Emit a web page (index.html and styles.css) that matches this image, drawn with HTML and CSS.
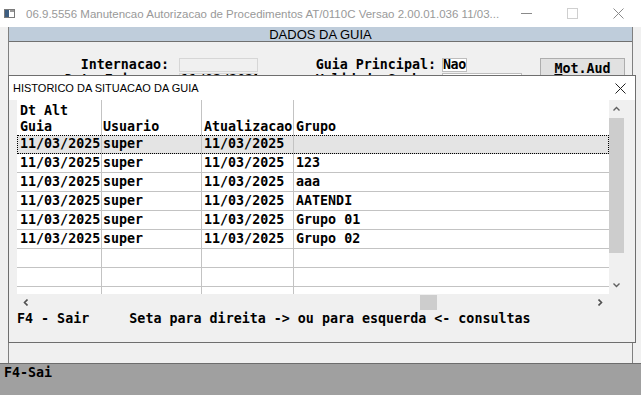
FILE: index.html
```html
<!DOCTYPE html>
<html lang="pt">
  <head>
    <meta charset="UTF-8" />
    <title>Manutencao Autorizacao de Procedimentos</title>
    <link rel="stylesheet" href="styles.css">
  </head>
  <body>
    <div class="titlebar">
      <svg class="app-icon" width="11" height="9" viewBox="0 0 11 9">
        <rect x="0.5" y="0.5" width="10" height="8" fill="#fff" stroke="#7a7a7a" />
        <rect x="1" y="1" width="4" height="7" fill="#3d5d80" />
        <rect x="6" y="1" width="4" height="2" fill="#9a9a9a" />
      </svg>
      <span class="title">06.9.5556 Manutencao Autorizacao de Procedimentos AT/0110C Versao 2.00.01.036 11/03...</span>
      <div class="controls">
        <span class="ctl"><svg width="11" height="11" viewBox="0 0 11 11"><line x1="0" y1="5.5" x2="11" y2="5.5" stroke="#8a8a8a" /></svg></span>
        <span class="ctl"><svg width="11" height="11" viewBox="0 0 11 11"><rect x="0.5" y="0.5" width="10" height="10" fill="none" stroke="#cfcfcf" /></svg></span>
        <span class="ctl"><svg width="11" height="11" viewBox="0 0 11 11"><path d="M0.5 0.5 L10.5 10.5 M10.5 0.5 L0.5 10.5" stroke="#8a8a8a" /></svg></span>
      </div>
    </div>

    <div class="frame">
      <div class="band">DADOS DA GUIA</div>
      <div class="form">
        <div class="btn-cell"><button class="btn"><u>M</u>ot.Aud</button></div>
        <span class="lbl">Internacao:</span>
        <div><span class="box off"></span></div>
        <span class="lbl">Guia Principal:</span>
        <div><span class="box short">Nao</span></div>
        <span class="lbl">Data Emissao:</span>
        <div><span class="box off">11/03/2025</span></div>
        <span class="lbl">Validade Senha:</span>
        <div><span class="box wide"></span></div>
      </div>
    </div>

    <div class="status">F4-Sai</div>

    <div class="dialog">
      <div class="dlg-title">
        <span>HISTORICO DA SITUACAO DA GUIA</span>
        <svg class="dlg-close" width="11" height="11" viewBox="0 0 11 11"><path d="M0.5 0.5 L10.5 10.5 M10.5 0.5 L0.5 10.5" stroke="#222" /></svg>
      </div>
      <div class="dlg-body">
        <div class="grid-wrap">
          <div class="grid">
            <div class="row head">
              <div class="c c1">Dt Alt<br>Guia</div>
              <div class="c c2"><br>Usuario</div>
              <div class="c c3"><br>Atualizacao</div>
              <div class="c c4"><br>Grupo</div>
            </div>
            <div class="row sel">
              <div class="c c1">11/03/2025</div><div class="c c2">super</div><div class="c c3">11/03/2025</div><div class="c c4"></div>
            </div>
            <div class="row">
              <div class="c c1">11/03/2025</div><div class="c c2">super</div><div class="c c3">11/03/2025</div><div class="c c4">123</div>
            </div>
            <div class="row">
              <div class="c c1">11/03/2025</div><div class="c c2">super</div><div class="c c3">11/03/2025</div><div class="c c4">aaa</div>
            </div>
            <div class="row">
              <div class="c c1">11/03/2025</div><div class="c c2">super</div><div class="c c3">11/03/2025</div><div class="c c4">AATENDI</div>
            </div>
            <div class="row">
              <div class="c c1">11/03/2025</div><div class="c c2">super</div><div class="c c3">11/03/2025</div><div class="c c4">Grupo 01</div>
            </div>
            <div class="row">
              <div class="c c1">11/03/2025</div><div class="c c2">super</div><div class="c c3">11/03/2025</div><div class="c c4">Grupo 02</div>
            </div>
            <div class="row">
              <div class="c c1"></div><div class="c c2"></div><div class="c c3"></div><div class="c c4"></div>
            </div>
            <div class="row">
              <div class="c c1"></div><div class="c c2"></div><div class="c c3"></div><div class="c c4"></div>
            </div>
            <div class="row">
              <div class="c c1"></div><div class="c c2"></div><div class="c c3"></div><div class="c c4"></div>
            </div>
          </div>

          <div class="vscroll">
            <span class="arrow"><svg width="7" height="5" viewBox="0 0 7 5"><polyline points="0.5,4.5 3.5,1.5 6.5,4.5" fill="none" stroke="#606060" stroke-width="1.4" /></svg></span>
            <span class="vthumb"></span>
            <span class="arrow down"><svg width="7" height="5" viewBox="0 0 7 5"><polyline points="0.5,0.5 3.5,3.5 6.5,0.5" fill="none" stroke="#606060" stroke-width="1.4" /></svg></span>
          </div>

          <div class="hscroll">
            <span class="arrow"><svg width="5" height="7" viewBox="0 0 5 7"><polyline points="4.5,0.5 1.5,3.5 4.5,6.5" fill="none" stroke="#505050" stroke-width="1.6" /></svg></span>
            <span class="htrack"><span class="hthumb"></span></span>
            <span class="arrow"><svg width="5" height="7" viewBox="0 0 5 7"><polyline points="0.5,0.5 3.5,3.5 0.5,6.5" fill="none" stroke="#505050" stroke-width="1.6" /></svg></span>
          </div>
          <div class="corner"></div>
        </div>
        <p class="keys">F4 - Sair     Seta para direita -&gt; ou para esquerda &lt;- consultas</p>
      </div>
    </div>
  </body>
</html>
```

FILE: styles.css
```css
body {
  margin: 0;
  width: 641px;
  height: 395px;
  overflow: hidden;
  position: relative;
  background-color: #f0f0f0;
  font-family: "DejaVu Sans Mono", monospace;
  font-size: 13.33px;
  font-weight: bold;
  color: #000;
}

/* barra de titulo */
.titlebar {
  height: 27px;
  background-color: #fff;
  display: flex;
  align-items: center;
}
.app-icon {
  flex-shrink: 0;
  margin-left: 4px;
}
.title {
  margin-left: 11px;
  font-family: "Liberation Sans", sans-serif;
  font-weight: normal;
  font-size: 11.5px;
  color: #999;
  white-space: nowrap;
  overflow: hidden;
}
.controls {
  flex-shrink: 0;
  margin-left: auto;
  display: flex;
  height: 27px;
}
.ctl {
  width: 46px;
  display: flex;
  align-items: center;
  justify-content: center;
}

/* janela principal */
.frame {
  margin-left: 8px;
  width: 625px;
  height: 336px;
  box-sizing: border-box;
  border-left: 1px solid #808080;
  border-right: 1px solid #808080;
}
.band {
  height: 14px;
  line-height: 16px;
  background-color: #bfcddb;
  border-bottom: 1px solid #707070;
  text-align: center;
  font-family: "Liberation Sans", sans-serif;
  font-weight: normal;
  font-size: 13px;
}
.form {
  display: grid;
  grid-template-columns: 160px 89px 178px 86px 103px;
  grid-template-rows: 14px 14px;
  row-gap: 1px;
  padding-top: 16px;
}
.lbl {
  text-align: right;
  line-height: 14px;
  white-space: nowrap;
}
.box {
  display: block;
  height: 14px;
  box-sizing: border-box;
  margin-left: 10px;
  width: 79px;
  border: 1px solid #d6d6d6;
  background-color: #f0f0f0;
  line-height: 12px;
  padding-left: 1px;
  overflow: hidden;
  white-space: nowrap;
}
.box.short {
  margin-left: 6px;
  width: 25px;
  padding-left: 0;
  background-color: #fff;
  border-color: #bdbdbd;
  letter-spacing: -0.4px;
}
.box.wide {
  margin-left: 6px;
  width: 80px;
  background-color: #fff;
  border-color: #bdbdbd;
}
.btn-cell {
  grid-column: 5;
  grid-row: 1 / span 2;
}
.btn {
  margin-left: 18px;
  width: 85px;
  height: 21px;
  padding: 0;
  background-color: #e1e1e1;
  border: 1px solid #adadad;
  font: inherit;
  color: #000;
}

.status {
  height: 32px;
  box-sizing: border-box;
  border-top: 1px solid #6d6d6d;
  background-color: #a0a0a0;
  padding: 1px 0 0 4px;
  line-height: 16px;
}

/* dialogo historico */
.dialog {
  position: absolute;
  left: 8px;
  top: 75px;
  width: 628px;
  height: 268px;
  box-sizing: border-box;
  border: 1px solid #6e6e6e;
  background-color: #f0f0f0;
}
.dlg-title {
  height: 24px;
  background-color: #fff;
  display: flex;
  align-items: center;
  padding: 0 9px 0 4px;
  font-family: "Liberation Sans", sans-serif;
  font-weight: normal;
  font-size: 11px;
}
.dlg-close {
  margin-left: auto;
}
.dlg-body {
  padding-left: 8px;
}
.grid-wrap {
  display: grid;
  grid-template-columns: 592px 17px;
  grid-template-rows: 194px 17px;
}
.grid {
  background-color: #fff;
  overflow: hidden;
}
.row {
  display: flex;
  height: 19px;
  box-sizing: border-box;
  border-bottom: 1px solid #c3c3c3;
  line-height: 18px;
}
.row.head {
  height: 35px;
  border-bottom: none;
  line-height: 16px;
}
.row.head .c {
  padding-top: 3px;
}
.row.sel {
  background-color: #e4e4e4;
  outline: 1px dotted #000;
  outline-offset: -1px;
}
.c {
  box-sizing: border-box;
  padding-left: 2px;
  white-space: nowrap;
  overflow: hidden;
}
.c1 {
  width: 85px;
  padding-left: 3px;
  border-right: 1px solid #c3c3c3;
}
.c2 {
  width: 100px;
  padding-left: 1px;
  border-right: 1px solid #c3c3c3;
}
.c3 {
  width: 92px;
  border-right: 1px solid #c3c3c3;
}
.c4 {
  flex: 1;
}

.vscroll {
  display: flex;
  flex-direction: column;
}
.vscroll .arrow {
  height: 17px;
  display: flex;
  align-items: center;
  justify-content: center;
  padding-right: 2px;
}
.vthumb {
  display: block;
  margin-top: 1px;
  width: 15px;
  height: 135px;
  background-color: #cdcdcd;
}
.vscroll .down {
  margin-top: auto;
}
.hscroll {
  display: flex;
}
.hscroll .arrow {
  width: 17px;
  display: flex;
  align-items: center;
  justify-content: center;
}
.htrack {
  flex: 1;
}
.hthumb {
  display: block;
  margin: 1px 0 0 386px;
  width: 17px;
  height: 15px;
  background-color: #cdcdcd;
}
.keys {
  margin: 0;
  line-height: 16px;
  white-space: pre;
}
```
